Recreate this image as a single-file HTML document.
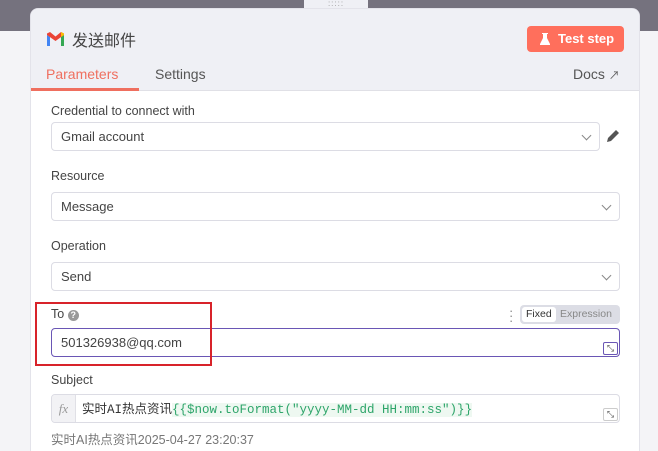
<!DOCTYPE html><html style="overflow:hidden;width:658px;height:451px"><head><meta charset="utf-8"><style>
*{box-sizing:border-box;margin:0;padding:0}
body{width:658px;height:451px;overflow:hidden;background:#f4f4f7;font-family:"Liberation Sans","Noto Sans CJK SC",sans-serif;position:relative;color:#555}
.strip{position:absolute;left:0;top:0;width:658px;height:31px;background:#75727e}
.handle{position:absolute;left:304px;top:0;width:64px;height:10px;background:#eff0f5;color:#999;font-size:8px;text-align:center;letter-spacing:1px;line-height:8px}
.panel{position:absolute;left:30px;top:8px;width:610px;height:443px;background:#fff;border-radius:8px 8px 0 0;overflow:hidden;border:1px solid #e3e3ea;border-bottom:none}
.head{height:82px;background:#eff0f5;position:relative;border-bottom:1px solid #e0e0e6}
.title{position:absolute;left:15px;top:18px;font-size:16px;color:#444;display:flex;align-items:center;gap:7px}
.btn{position:absolute;left:496px;top:17px;width:97px;height:26px;background:#ff6f5c;border-radius:4px;color:#fff;font-size:13px;font-weight:bold;line-height:26px;padding-left:31px}
.tab{position:absolute;top:57px;font-size:14px}
.lbl{position:absolute;left:20px;font-size:12.5px;color:#444}
.inp{position:absolute;left:20px;width:569px;height:29px;border:1px solid #dcdce4;border-radius:4px;font-size:13px;color:#444;line-height:27px;padding-left:9px}
.chev{position:absolute;right:9px;top:9px;width:7px;height:7px;border-right:1px solid #888;border-bottom:1px solid #888;transform:rotate(45deg)}
.exp{position:absolute;right:1px;bottom:1px;width:15px;height:13px;border:1px solid #ccc;border-radius:2px;background:#fff;font-size:9px;line-height:11px;text-align:center;color:#555}
</style></head><body>
<div class="strip"></div>
<div class="handle">:::::</div>
<div class="panel">
<div class="head">
<div class="title"><svg width="19" height="14" viewBox="0 0 19 14"><path d="M1 14V3l3 2v9z" fill="#4285f4"/><path d="M15 14V5l3-2v11z" fill="#34a853"/><path d="M1 3l8.5 6L18 3v-1.5L15 0 9.5 4.5 4 0 1 1.5z" fill="#ea4335"/><path d="M15 5V0l3 1.5V3z" fill="#fbbc04"/></svg>发送邮件</div>
<div class="btn"><svg style="position:absolute;left:13px;top:7px" width="10" height="12" viewBox="0 0 10 12"><path d="M2 0h6v1H7v4l3 6v1H0v-1l3-6V1H2z" fill="#fff"/></svg>Test step</div>
<div class="tab" style="left:15px;color:#ef6f5f">Parameters</div>
<div style="position:absolute;left:0;top:79px;width:108px;height:3px;background:#ef6f5f"></div>
<div class="tab" style="left:124px;color:#555">Settings</div>
<div class="tab" style="left:542px;color:#555">Docs <span style="font-size:11px">↗</span></div>
</div>
<div class="lbl" style="top:95px">Credential to connect with</div>
<div class="inp" style="top:113px;width:549px">Gmail account<div class="chev"></div></div>
<svg style="position:absolute;left:574px;top:119px" width="16" height="16" viewBox="0 0 16 16"><path d="M2 14l1-4 8-8 3 3-8 8z" fill="#555"/></svg>
<div class="lbl" style="top:160px">Resource</div>
<div class="inp" style="top:183px">Message<div class="chev"></div></div>
<div class="lbl" style="top:230px">Operation</div>
<div class="inp" style="top:253px">Send<div class="chev"></div></div>
<div class="lbl" style="top:298px">To <span style="display:inline-block;width:11px;height:11px;border-radius:50%;background:#999;color:#fff;font-size:9px;text-align:center;line-height:11px;font-weight:bold">?</span></div>
<div style="position:absolute;left:478px;top:299px;color:#888;font-size:13px;line-height:5px">·<br>·<br>·</div>
<div style="position:absolute;left:489px;top:296px;width:100px;height:19px;background:#dcdde5;border-radius:4px;font-size:10.5px;line-height:15px"><span style="position:absolute;left:2px;top:2px;background:#fff;border-radius:3px;padding:0 4px;color:#333">Fixed</span><span style="position:absolute;left:40px;top:2px;color:#888">Expression</span></div>
<div class="inp" style="top:319px;border-color:#6a56b5">501326938@qq.com<div class="exp" style="border-color:#6a56b5">⤡</div></div>
<div class="lbl" style="top:364px">Subject</div>
<div class="inp" style="top:385px;padding-left:0;overflow:hidden"><span style="display:inline-block;width:24px;background:#f2f2f5;border-right:1px solid #e0e0e6;text-align:center;color:#999;font-style:italic;font-family:'Liberation Serif',serif">fx</span><span style="padding-left:6px;color:#333;font-family:'Liberation Mono','Noto Sans CJK SC',monospace;font-size:12.5px">实时AI热点资讯<span style="color:#2ea56a;background:#eef8f1">{{$now.toFormat("yyyy-MM-dd HH:mm:ss")}}</span></span><div class="exp">⤡</div></div>
<div class="lbl" style="top:420px;color:#777">实时AI热点资讯2025-04-27 23:20:37</div>
</div>
<div style="position:absolute;left:35px;top:302px;width:177px;height:64px;border:2px solid #d8232a"></div>
</body></html>
